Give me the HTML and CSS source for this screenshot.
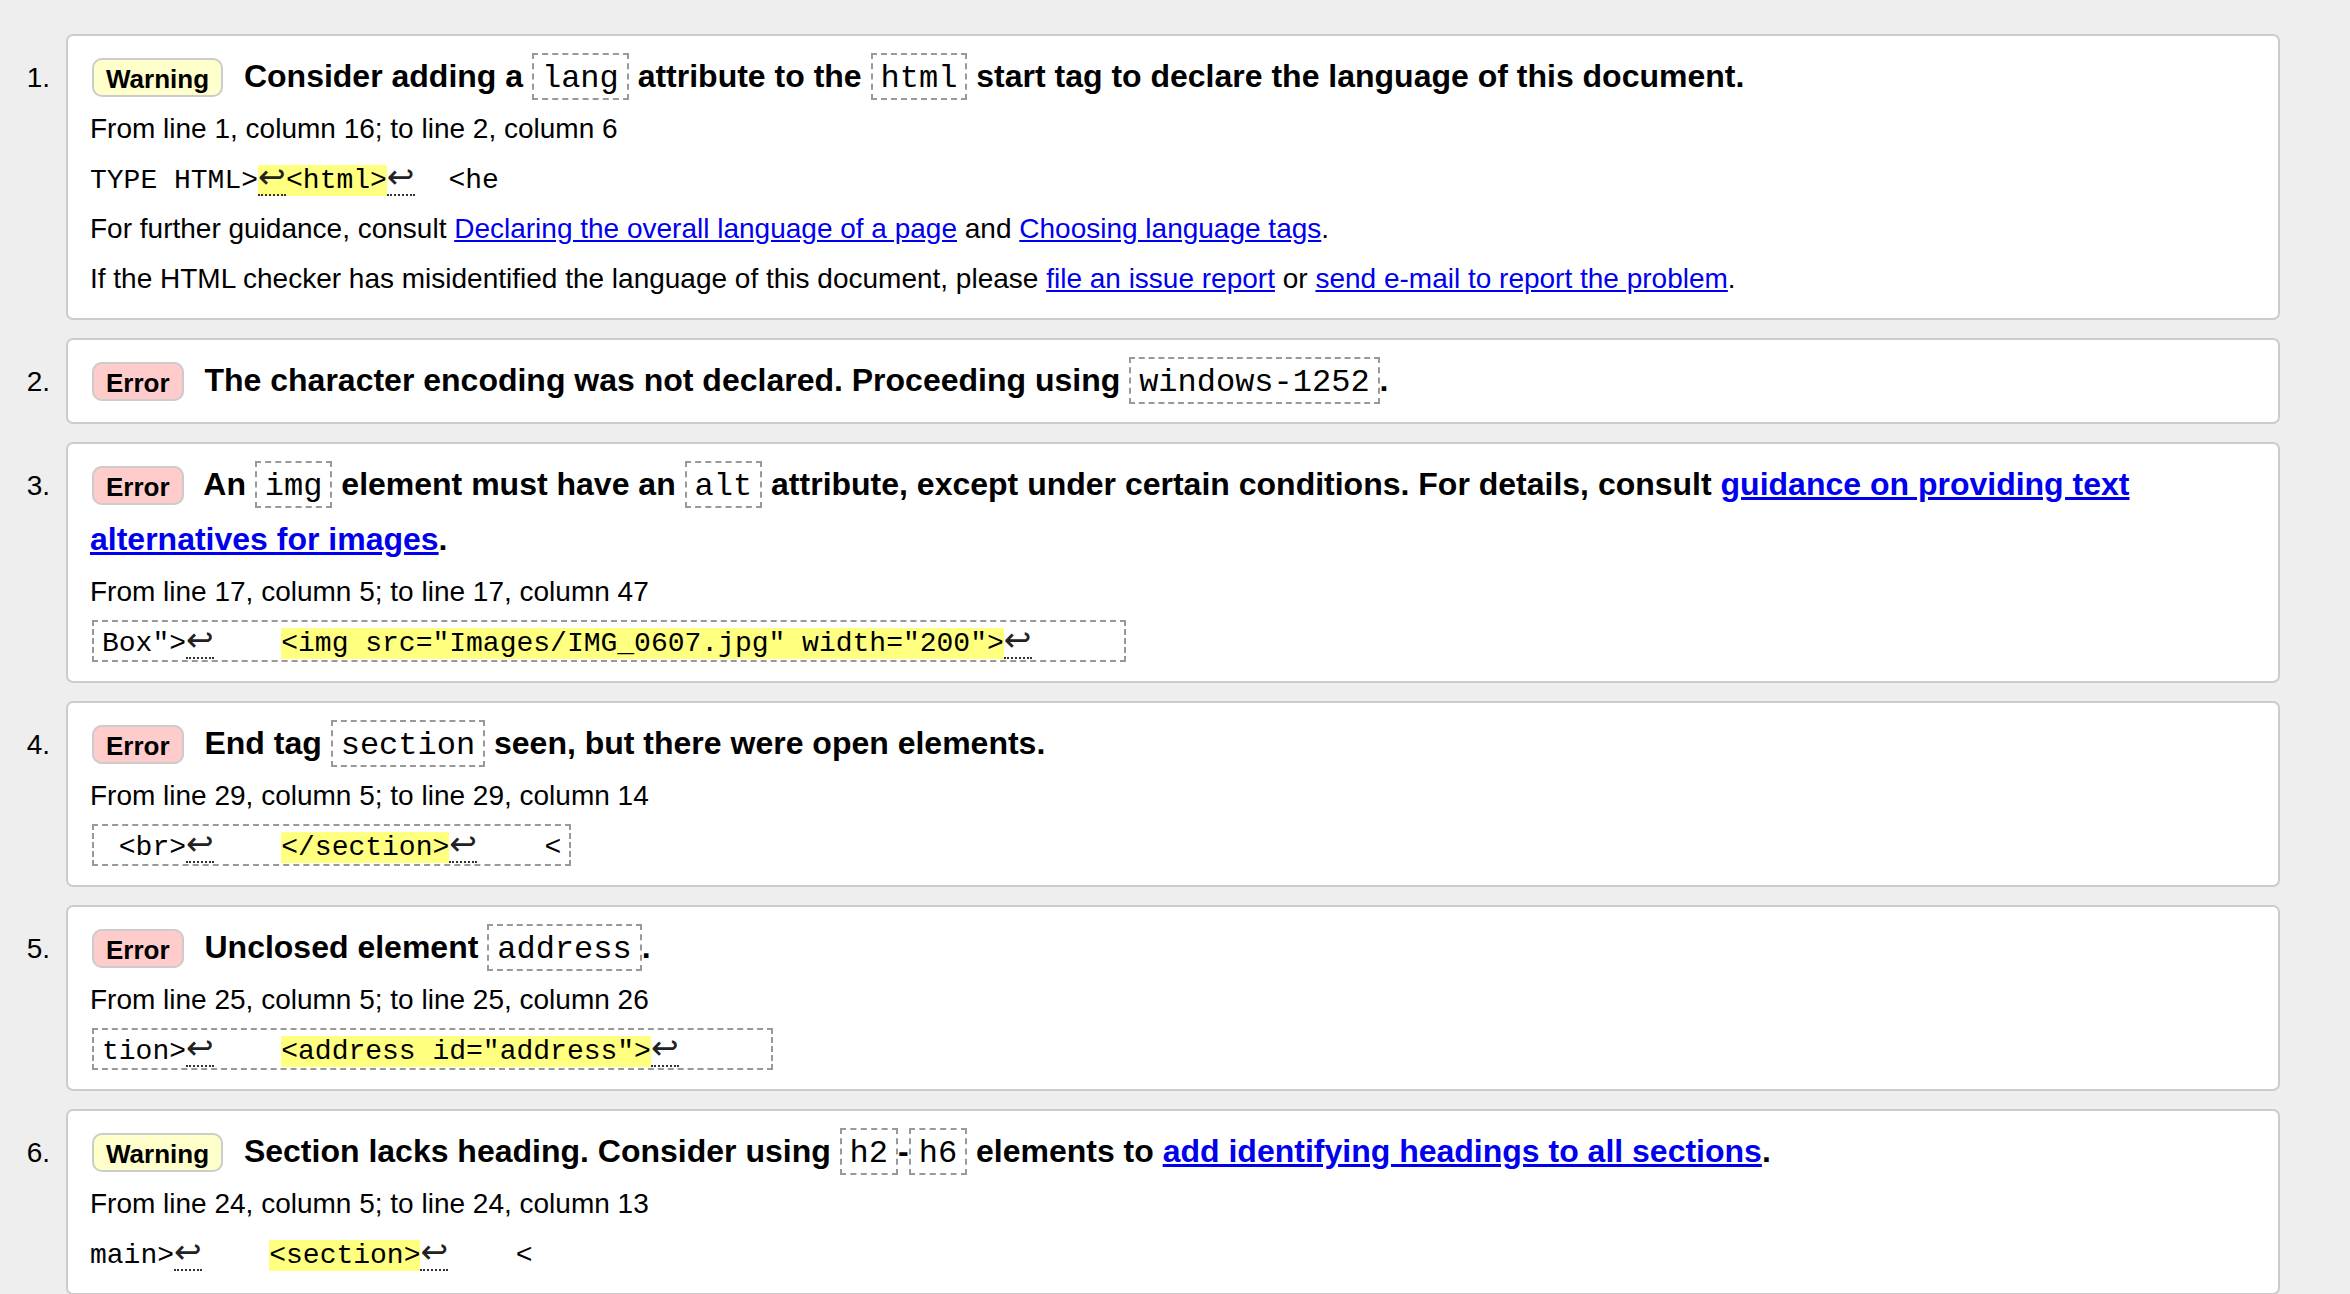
FILE: index.html
```html
<!DOCTYPE html>
<html lang="en">
<head>
<meta charset="utf-8">
<title>Validation messages</title>
<link rel="stylesheet" href="styles.css">
</head>
<body>
<ol class="messages">
  <li class="msg">
    <span class="num">1.</span>
    <div class="card">
      <p class="title"><strong class="badge warning">Warning</strong> Consider adding a <code>lang</code> attribute to the <code>html</code> start tag to declare the language of this document.</p>
      <p class="loc">From line 1, column 16; to line 2, column 6</p>
      <p class="extract"><code>TYPE HTML&gt;<span class="hl"><span class="lf">↩</span>&lt;html&gt;</span><span class="lf">↩</span>  &lt;he</code></p>
      <p>For further guidance, consult <a href="#">Declaring the overall language of a page</a> and <a href="#">Choosing language tags</a>.</p>
      <p>If the HTML checker has misidentified the language of this document, please <a href="#">file an issue report</a> or <a href="#">send e-mail to report the problem</a>.</p>
    </div>
  </li>
  <li class="msg">
    <span class="num">2.</span>
    <div class="card">
      <p class="title"><strong class="badge error">Error</strong> The character encoding was not declared. Proceeding using <code>windows-1252</code>.</p>
    </div>
  </li>
  <li class="msg">
    <span class="num">3.</span>
    <div class="card">
      <p class="title"><strong class="badge error">Error</strong> An <code>img</code> element must have an <code>alt</code> attribute, except under certain conditions. For details, consult <a href="#">guidance on providing text alternatives for images</a>.</p>
      <p class="loc">From line 17, column 5; to line 17, column 47</p>
      <p class="extract boxed"><code>Box"&gt;<span class="lf">↩</span>    <span class="hl">&lt;img src="Images/IMG_0607.jpg" width="200"&gt;</span><span class="lf">↩</span>     </code></p>
    </div>
  </li>
  <li class="msg">
    <span class="num">4.</span>
    <div class="card">
      <p class="title"><strong class="badge error">Error</strong> End tag <code>section</code> seen, but there were open elements.</p>
      <p class="loc">From line 29, column 5; to line 29, column 14</p>
      <p class="extract boxed"><code> &lt;br&gt;<span class="lf">↩</span>    <span class="hl">&lt;/section&gt;</span><span class="lf">↩</span>    &lt;</code></p>
    </div>
  </li>
  <li class="msg">
    <span class="num">5.</span>
    <div class="card">
      <p class="title"><strong class="badge error">Error</strong> Unclosed element <code>address</code>.</p>
      <p class="loc">From line 25, column 5; to line 25, column 26</p>
      <p class="extract boxed"><code>tion&gt;<span class="lf">↩</span>    <span class="hl">&lt;address id="address"&gt;</span><span class="lf">↩</span>     </code></p>
    </div>
  </li>
  <li class="msg">
    <span class="num">6.</span>
    <div class="card">
      <p class="title"><strong class="badge warning">Warning</strong> Section lacks heading. Consider using <code>h2</code>-<code>h6</code> elements to <a href="#">add identifying headings to all sections</a>.</p>
      <p class="loc">From line 24, column 5; to line 24, column 13</p>
      <p class="extract"><code>main&gt;<span class="lf">↩</span>    <span class="hl">&lt;section&gt;</span><span class="lf">↩</span>    &lt;</code></p>
    </div>
  </li>
</ol>
</body>
</html>
```

FILE: styles.css
```css
* {
  box-sizing: border-box;
}

html {
  overflow: hidden;
}

html,
body {
  margin: 0;
  padding: 0;
}

body {
  background: #eeeeee;
  color: #000;
  font-family: "Liberation Sans", Arial, Helvetica, sans-serif;
  font-size: 28px;
}

.messages {
  list-style: none;
  margin: 0;
  padding: 34px 70px 0 0;
  display: flex;
  flex-direction: column;
  gap: 18px;
}

.msg {
  display: flex;
  align-items: flex-start;
  gap: 16px;
}

.num {
  flex: 0 0 50px;
  text-align: right;
  padding-top: 16px;
  line-height: 55px;
  font-size: 28px;
}

.card {
  flex: 1;
  min-width: 0;
  background: #fff;
  border: 2px solid #cccccc;
  border-radius: 7px;
  padding: 13px 24px 14px 22px;
}

.card p {
  margin: 0;
  line-height: 50px;
}

.card .title {
  font-size: 32px;
  font-weight: bold;
  line-height: 55px;
}

.title code {
  font-family: "Liberation Mono", "Courier New", monospace;
  font-weight: normal;
  font-size: 32px;
  line-height: 1;
  padding: 5px 8px 1px;
  border: 2px dashed #999;
}

.badge {
  font-size: 26px;
  line-height: 1;
  padding: 3.5px 12px 1.5px;
  border: 2px solid #cccccc;
  border-radius: 10px;
  margin: 0 12px 0 2px;
}

.warning {
  background: #ffffcc;
}

.error {
  background: #ffcccc;
}

.card .extract {
  font-family: "Liberation Mono", "Courier New", monospace;
  line-height: 46px;
  padding-top: 4px;
}

.extract code {
  font-family: inherit;
  font-size: 28px;
  white-space: pre;
}

.extract.boxed code {
  border: 2px dashed #999;
  padding: 6px 8px 1px;
  margin-left: 2px;
}

.hl {
  background: #ffff80;
}

.lf {
  display: inline-block;
  width: 28px;
  overflow: visible;
  font-family: "DejaVu Sans", sans-serif;
  font-size: 33px;
  line-height: 1;
  padding-bottom: 1px;
  border-bottom: 2px dotted #333;
  color: #222;
}

a {
  color: #0000ee;
  text-decoration: underline;
}
```
